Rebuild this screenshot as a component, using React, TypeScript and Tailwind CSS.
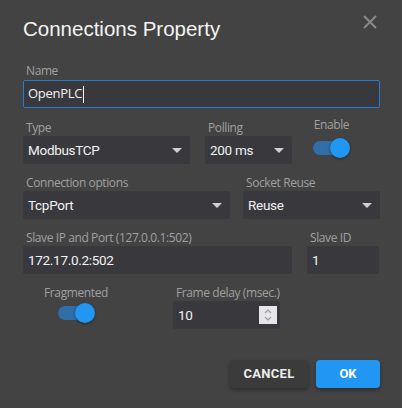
import React from 'react';

const labelFont = "whitespace-nowrap text-[12px] leading-4 text-[#a0a0a0] font-['Open_Sans',sans-serif] tracking-[-0.4px]";
const labelCls = `block h-4 pl-[3px] ${labelFont}`;
const boxCls = "flex items-center h-7 rounded-[2px] bg-[#38383d] px-[5px] text-[13.5px] tracking-[-0.3px] text-[#f2f2f2] font-['Roboto',sans-serif]";

const Arrow = () => (
  <svg width="10" height="5" viewBox="0 0 10 5" className="ml-auto mr-[3px]">
    <path d="M0 0h10L5 5z" fill="#d0d0d0" />
  </svg>
);

const Select = ({ label, value, width }: { label: string; value: string; width: string }) => (
  <div className={width}>
    <span className={labelCls}>{label}</span>
    <div className={boxCls}>
      <span>{value}</span>
      <Arrow />
    </div>
  </div>
);

const Toggle = () => (
  <div className="relative h-5 w-[37px]">
    <div className="absolute left-0 top-[3px] h-[14px] w-[34px] rounded-full bg-[#2f6ea6]" />
    <div className="absolute left-[17px] top-0 h-5 w-5 rounded-full bg-[#2196f3] shadow-[0_1px_3px_rgba(0,0,0,0.4)]" />
  </div>
);

export default function App() {
  return (
    <div className="w-[402px] h-[408px] bg-[#434343] pl-[23px] pr-[22px] pt-[17px] relative">
      <div className="flex items-start">
        <h2 className="text-[20.5px] leading-6 text-[#f4f4f4] font-['Liberation_Sans',Arial,sans-serif]">Connections Property</h2>
        <button className="ml-auto mt-[-2px] mr-[3px]" aria-label="close">
          <svg width="14" height="14" viewBox="0 0 14 14">
            <path d="M1 1l12 12M13 1L1 13" stroke="#8a8a8a" strokeWidth="2" />
          </svg>
        </button>
      </div>

      <div className="mt-[22px]">
        <span className={labelCls}>Name</span>
        <div className="flex items-center h-7 rounded-[2px] border border-[#1e7fd4] bg-[#38383d] px-[4px] text-[13px] tracking-[-0.3px] text-[#f2f2f2] font-['Open_Sans',sans-serif] mt-[1px]">
          <span>OpenPLC</span>
          <span className="ml-[1px] h-[17px] w-px bg-[#f2f2f2]" />
        </div>
      </div>

      <div className="mt-3 flex items-start">
        <Select label="Type" value="ModbusTCP" width="w-[167px]" />
        <Select label="Polling" value="200 ms" width="w-[87px] ml-[15px]" />
        <div className="ml-[21px] flex flex-col items-center">
          <span className={`block h-4 mt-[-3px] ${labelFont}`}>Enable</span>
          <div className="mt-[5px]"><Toggle /></div>
        </div>
      </div>

      <div className="mt-[11px] flex items-start">
        <Select label="Connection options" value="TcpPort" width="w-[207px]" />
        <Select label="Socket Reuse" value="Reuse" width="w-[137px] ml-[13px]" />
      </div>

      <div className="mt-[11px] flex items-start">
        <div className="w-[269px]">
          <span className={labelCls}>Slave IP and Port (127.0.0.1:502)</span>
          <div className={boxCls}>172.17.0.2:502</div>
        </div>
        <div className="w-[72px] ml-[15px]">
          <span className={labelCls}>Slave ID</span>
          <div className={boxCls}>1</div>
        </div>
      </div>

      <div className="mt-[11px] flex items-start">
        <div className="w-[86px] ml-[10px] flex flex-col items-center">
          <span className={`block h-4 ${labelFont}`}>Fragmented</span>
          <div className="mt-[2px]"><Toggle /></div>
        </div>
        <div className="w-[107px] ml-[54px]">
          <span className={labelCls}>Frame delay (msec.)</span>
          <div className={boxCls}>
            <span>10</span>
            <div className="ml-auto mr-[-2px] flex h-[18px] w-[18px] flex-col items-center justify-center bg-[#e6e6ea]">
              <svg width="10" height="14" viewBox="0 0 10 14">
                <path d="M2 5l3-3 3 3M2 9l3 3 3-3" fill="none" stroke="#9a9aa0" strokeWidth="1.2" />
              </svg>
            </div>
          </div>
        </div>
      </div>

      <div className="mt-[31px] flex justify-end gap-[8px] pr-0">
        <button className="h-7 w-[78px] rounded-[4px] bg-[#3b3b3b] text-[13px] font-bold tracking-[0.3px] text-[#ececec] shadow-[0_2px_4px_rgba(0,0,0,0.35)] font-['Roboto',sans-serif]">CANCEL</button>
        <button className="h-7 w-[64px] rounded-[4px] bg-[#2196f3] text-[13px] font-bold text-white shadow-[0_2px_4px_rgba(0,0,0,0.35)] font-['Roboto',sans-serif]">OK</button>
      </div>
    </div>
  );
}
